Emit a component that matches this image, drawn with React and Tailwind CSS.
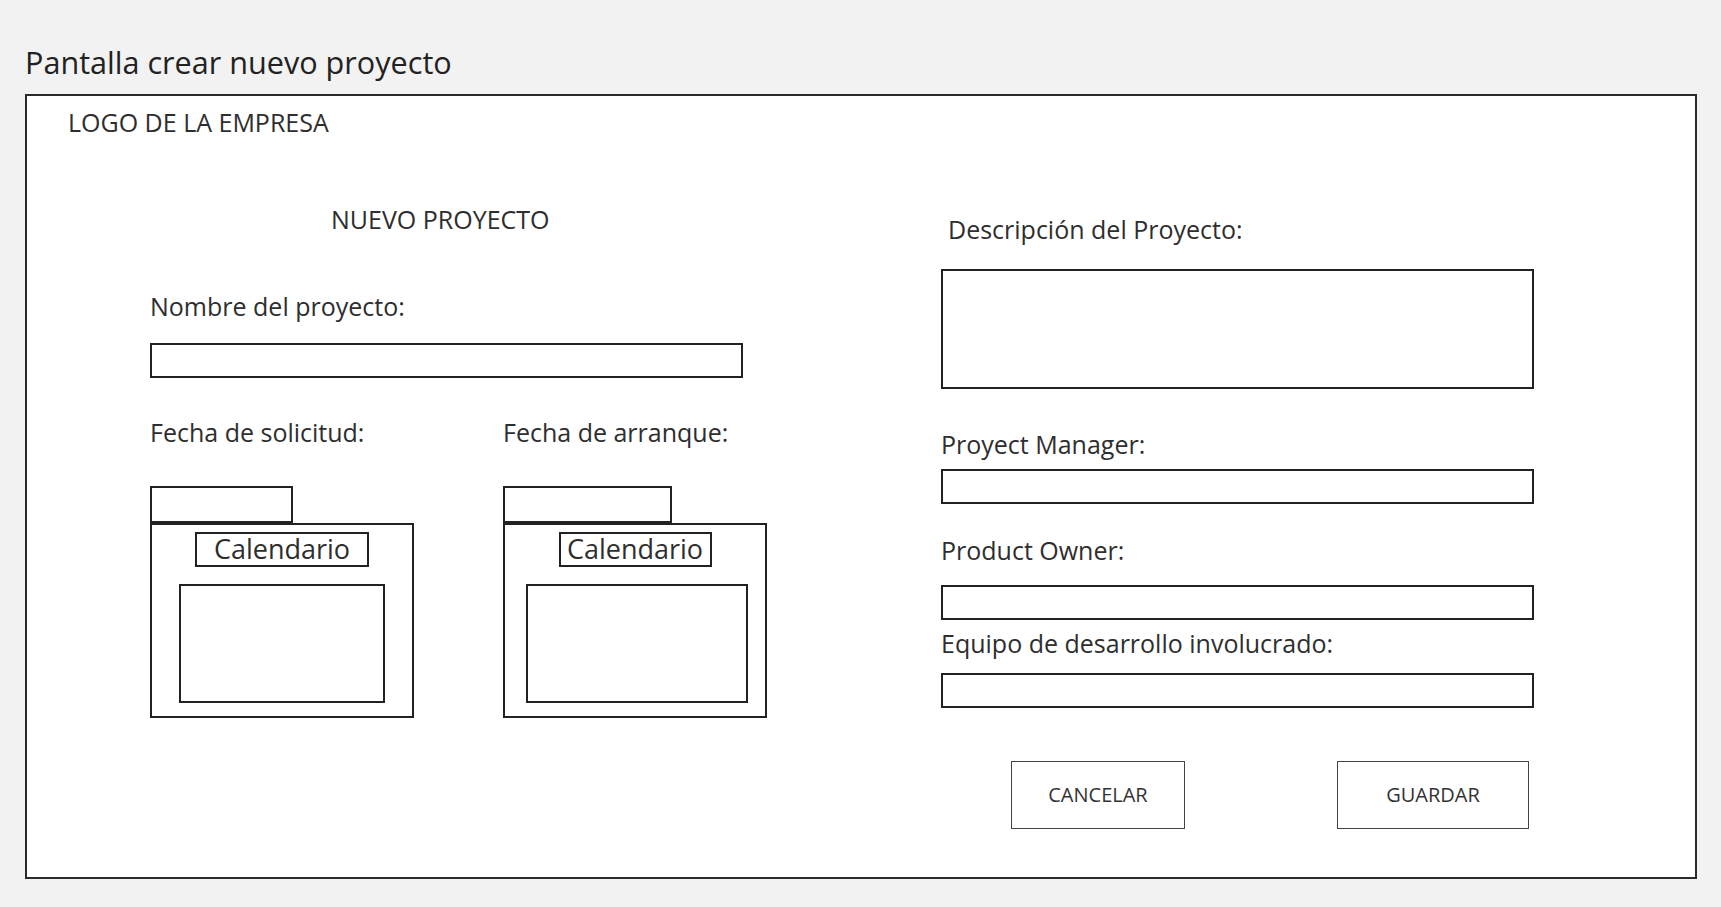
const font = { fontFamily: '"Open Sans", "Liberation Sans", sans-serif' };

function Label({ children, className = "" }) {
  return (
    <div className={`text-[25px] leading-[32px] text-[#2e2e2e] whitespace-nowrap ${className}`}>
      {children}
    </div>
  );
}

function Field({ className = "" }) {
  return <div className={`w-[593px] border-2 border-[#222] bg-white ${className}`} />;
}

function CalendarPicker({ tabW, labelW, innerW, innerMl }) {
  return (
    <div className="flex flex-col">
      <div className={`h-[37px] border-2 border-[#222] ${tabW}`} />
      <div className="w-[264px] h-[195px] border-2 border-[#222] flex flex-col items-center">
        <div
          className={`mt-[7px] h-[35px] border-2 border-[#222] flex items-center justify-center text-[27px] text-[#2e2e2e] ${labelW}`}
        >
          Calendario
        </div>
        <div className={`mt-[17px] h-[119px] border-2 border-[#222] ${innerW} ${innerMl}`} />
      </div>
    </div>
  );
}

export default function App() {
  return (
    <div className="min-h-[907px] bg-[#f2f2f2] pl-[25px] pr-[24px] pt-[42px]" style={font}>
      <h1 className="text-[30.6px] leading-[40px] text-[#222] font-normal">
        Pantalla crear nuevo proyecto
      </h1>

      <div className="mt-[12px] w-[1672px] h-[785px] border-2 border-[#2a2a2a] bg-white">
        <Label className="mt-[10px] ml-[41px]">LOGO DE LA EMPRESA</Label>

        <div className="flex pl-[123px]">
          {/* left column */}
          <div className="w-[791px] flex flex-col">
            <Label className="mt-[65px] ml-[181px]">NUEVO PROYECTO</Label>
            <Label className="mt-[55px]">Nombre del proyecto:</Label>
            <Field className="mt-[21px] h-[35px]" />

            <div className="flex mt-[38px]">
              <div className="w-[353px] flex flex-col">
                <Label>Fecha de solicitud:</Label>
                <div className="mt-[38px]">
                  <CalendarPicker
                    tabW="w-[143px]"
                    labelW="w-[174px]"
                    innerW="w-[206px]"
                    innerMl="ml-0"
                  />
                </div>
              </div>
              <div className="flex flex-col">
                <Label>Fecha de arranque:</Label>
                <div className="mt-[38px]">
                  <CalendarPicker
                    tabW="w-[169px]"
                    labelW="w-[153px]"
                    innerW="w-[222px]"
                    innerMl="ml-[4px]"
                  />
                </div>
              </div>
            </div>
          </div>

          {/* right column */}
          <div className="w-[593px] flex flex-col">
            <Label className="mt-[75px] ml-[7px]">Descripción del Proyecto:</Label>
            <Field className="mt-[24px] h-[120px]" />
            <Label className="mt-[39px]">Proyect Manager:</Label>
            <Field className="mt-[9px] h-[35px]" />
            <Label className="mt-[30px]">Product Owner:</Label>
            <Field className="mt-[19px] h-[35px]" />
            <Label className="mt-[7px]">Equipo de desarrollo involucrado:</Label>
            <Field className="mt-[14px] h-[35px]" />

            <div className="flex mt-[53px]">
              <button className="ml-[70px] w-[174px] h-[68px] border border-[#444] bg-white text-[20px] text-[#333]">
                CANCELAR
              </button>
              <button className="ml-[152px] w-[192px] h-[68px] border border-[#444] bg-white text-[20px] text-[#333]">
                GUARDAR
              </button>
            </div>
          </div>
        </div>
      </div>
    </div>
  );
}
